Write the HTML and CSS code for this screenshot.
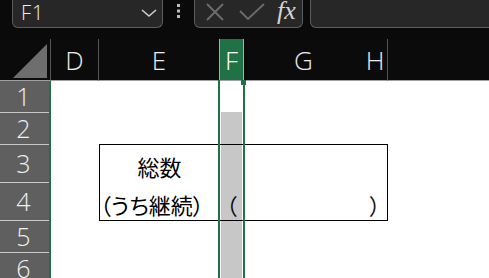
FILE: index.html
```html
<!DOCTYPE html>
<html lang="ja">
<head>
<meta charset="UTF-8">
<title>Sheet</title>
<link rel="stylesheet" href="styles.css">
</head>
<body>
<div class="topbar">
	<div class="namebox">
		<span class="ref">F1</span>
		<svg class="chev" width="16" height="10" viewBox="0 0 16 10"><path d="M1 2 L8 8 L15 2" fill="none" stroke="#cfcfcf" stroke-width="1.6"/></svg>
	</div>
	<div class="more">
		<svg width="6" height="16" viewBox="0 0 6 16"><rect x="1" y="1" width="3" height="3" fill="#bdbdbd"/><rect x="1" y="6.5" width="3" height="3" fill="#bdbdbd"/><rect x="1" y="12" width="3" height="3" fill="#bdbdbd"/></svg>
	</div>
	<div class="fbuttons">
		<svg class="ico" width="20" height="20" viewBox="0 0 20 20"><path d="M2 2 L18 18 M18 2 L2 18" stroke="#6c6c6c" stroke-width="1.8" fill="none"/></svg>
		<svg class="ico" width="26" height="18" viewBox="0 0 26 18"><path d="M1 8 L9 16 L25 1" stroke="#6c6c6c" stroke-width="1.8" fill="none"/></svg>
		<span class="fx">fx</span>
	</div>
	<div class="finput"></div>
</div>

<div class="sheet">
	<div class="corner"><svg width="36" height="36" viewBox="0 0 36 36"><path d="M1 35 L35 1 L35 35 Z" fill="#6e6e6e"/></svg></div>
	<div class="colhead sep">D</div>
	<div class="colhead">E</div>
	<div class="colhead active">F</div>
	<div class="colhead">G</div>
	<div class="colhead sep">H</div>
	<div class="colhead blank"></div>

	<div class="rownums">
		<div class="rowhead">1</div>
		<div class="rowhead">2</div>
		<div class="rowhead">3</div>
		<div class="rowhead">4</div>
		<div class="rowhead">5</div>
		<div class="rowhead">6</div>
	</div>

	<div class="box">
		<div class="cell total">総数</div>
		<div class="cell"></div>
		<div class="cell"></div>
		<div class="cell"></div>
		<div class="cell label">（うち継続）</div>
		<div class="cell paren">（</div>
		<div class="cell"></div>
		<div class="cell paren">）</div>
	</div>

	<div class="selection"><div class="handle"></div></div>
</div>
</body>
</html>
```

FILE: styles.css
```css
* {margin:0; padding:0; box-sizing: border-box;}
body {background: #0a0a0a; width: 489px; height: 278px; overflow: hidden; font-family: "Open Sans", "Noto Sans", sans-serif;}

.topbar {display: flex; align-items: flex-start; height: 39px;}
.namebox {margin-left: 12px; width: 151px; height: 28px; background: #272727; border: 1px solid #5c5c5c; border-top: 0; border-radius: 0 0 6px 6px; display: flex; align-items: center; justify-content: space-between; padding: 0 5px 2px 8px;}
.namebox .ref {color: #f2f2f2; font-size: 20px; font-weight: 300; line-height: 1; letter-spacing: 1px;}
.namebox .chev {margin-top: 1px;}
.more {width: 31px; height: 28px; display: flex; justify-content: center; padding-top: 3px;}
.fbuttons {width: 109px; height: 28px; background: #272727; border: 1px solid #5c5c5c; border-top: 0; border-radius: 0 0 6px 6px; display: flex; align-items: center; padding: 0 0 4px 10px; gap: 14px;}
.fbuttons .ico {flex: none;}
.fbuttons .fx {color: #d4d4d4; font-family: "Liberation Serif", serif; font-style: italic; font-size: 26px; line-height: 1; margin-left: -2px; margin-top: -2px;}
.finput {margin-left: 7px; flex: 1; margin-right: -10px; height: 28px; background: #272727; border: 1px solid #5c5c5c; border-top: 0; border-radius: 0 0 6px 6px;}

.sheet {position: relative; display: grid; grid-template-columns: 51px 48px 120px 25px 119px 25px 1fr; grid-template-rows: 42px 32px 32px 38px 38px 32px 32px; background: #fff;}
.corner {background: #0b0b0b; border-right: 1px solid #555; border-bottom: 1px solid #a0a0a0; padding: 4px 0 0 12px;}
.colhead {background: #0b0b0b; border-bottom: 1px solid #a0a0a0; color: #ececec; font-size: 26px; font-weight: 300; display: flex; align-items: center; justify-content: center; line-height: 1;}
.colhead.sep {border-right: 1px solid #555;}
.colhead.active {background: #1f7246; color: #fff; border-left: 1px solid #9ab5a5; border-right: 1px solid #9ab5a5;}

.rownums {grid-column: 1; grid-row: 2 / 8; display: grid; grid-template-rows: 32px 32px 38px 38px 32px 32px; background: #5f5f5f; border-right: 2px solid #1f7246;}
.rowhead {border-bottom: 1px solid #c9c9c9; color: #f0f0f0; font-size: 25px; font-weight: 300; display: flex; align-items: center; justify-content: center; padding-right: 2px; line-height: 1;}

.box {grid-column: 3 / 7; grid-row: 4 / 6; margin-top: -1px; border: 1px solid #000; display: grid; grid-template-columns: 119px 25px 119px 24px; grid-template-rows: 38px 37px; font-family: "Noto Sans CJK JP", sans-serif; font-size: 22px; font-weight: 400; color: #000; font-feature-settings: "palt";}
.cell {display: flex; align-items: center; justify-content: center; padding-top: 4px; white-space: nowrap;}
.cell.label {justify-content: flex-start;}
.cell.paren {color: #111;}

.selection {position: absolute; left: 218px; top: 41px; width: 27px; bottom: 0; border-left: 2px solid #1f7246; border-right: 2px solid #1f7246;}
.selection::after {content: ""; position: absolute; left: 1px; right: 1px; top: 32px; bottom: 0; background: rgba(0,0,0,0.22);}
.handle {position: absolute; right: -3px; top: 0; width: 5px; height: 5px; background: #1f7246;}
```
